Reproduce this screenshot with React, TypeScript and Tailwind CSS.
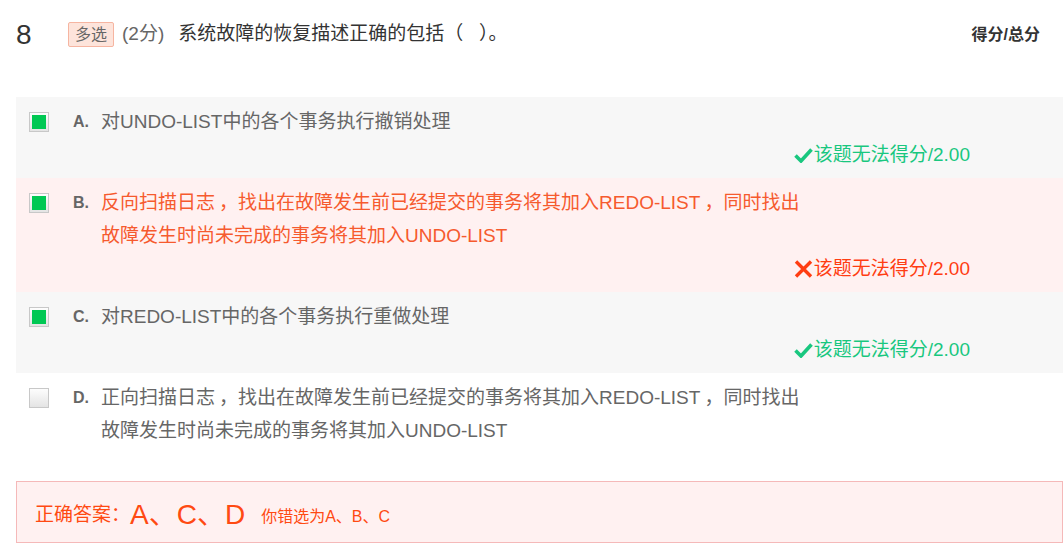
import React from 'react';

const FONT = { fontFamily: '"Liberation Sans", Arial, "Noto Sans CJK SC", sans-serif' };

type Opt = {
  key: string;
  lines: string[];
  checked: boolean;
  result?: 'right' | 'wrong';
};

const options: Opt[] = [
  { key: 'A', lines: ['对UNDO-LIST中的各个事务执行撤销处理'], checked: true, result: 'right' },
  {
    key: 'B',
    lines: ['反向扫描日志，找出在故障发生前已经提交的事务将其加入REDO-LIST，同时找出', '故障发生时尚未完成的事务将其加入UNDO-LIST'],
    checked: true,
    result: 'wrong',
  },
  { key: 'C', lines: ['对REDO-LIST中的各个事务执行重做处理'], checked: true, result: 'right' },
  {
    key: 'D',
    lines: ['正向扫描日志，找出在故障发生前已经提交的事务将其加入REDO-LIST，同时找出', '故障发生时尚未完成的事务将其加入UNDO-LIST'],
    checked: false,
  },
];

// full-width commas get a bit of air on the left, like the original
const Line = ({ text }: { text: string }) => {
  const parts = text.split('，');
  return (
    <div>
      {parts.map((p, i) => (
        <React.Fragment key={i}>
          {p}
          {i < parts.length - 1 && <span className="pl-[4px]">，</span>}
        </React.Fragment>
      ))}
    </div>
  );
};

const CheckBox = ({ checked }: { checked: boolean }) => (
  <div className="w-[20px] h-[20px] shrink-0 border border-[#c8c8c8] bg-gradient-to-b from-[#fdfdfd] to-[#e4e4e4] flex items-center justify-center">
    {checked && <div className="w-[14px] h-[14px] bg-[#00c853]" />}
  </div>
);

const CheckMark = () => (
  <svg width="19" height="16" viewBox="0 0 19 16" className="mr-[1px]">
    <path d="M1.5 8.5 L7 14 L17.5 2.5" fill="none" stroke="#19c77f" strokeWidth="3.6" strokeLinejoin="miter" />
  </svg>
);

const CrossMark = () => (
  <svg width="19" height="18" viewBox="0 0 19 18" className="mr-[1px]">
    <path d="M2 1.5 L17 16.5 M17 1.5 L2 16.5" fill="none" stroke="#ff3d12" strokeWidth="3.4" />
  </svg>
);

export default function App() {
  return (
    <div className="w-[1063px] h-[550px] bg-white overflow-hidden" style={FONT}>
      {/* header */}
      <div className="flex items-center h-[70px] pl-4 pr-[23px] pb-[1px]">
        <span className="text-[28px] text-[#333] leading-none w-[52px]">8</span>
        <span className="text-[16px] leading-[23px] px-[6px] border border-[#f6b5a1] bg-[#fde4db] text-[#666] rounded-[2px]">多选</span>
        <span className="text-[19px] text-[#666] ml-[8px]">(2分)</span>
        <span className="text-[19px] text-[#333] ml-[14px]">系统故障的恢复描述正确的包括（&nbsp;&nbsp;&nbsp;）。</span>
        <span className="ml-auto text-[16px] font-bold text-[#333]">得分/总分</span>
      </div>

      {/* options */}
      <div className="ml-4 mt-[27px]">
        {options.map((o) => {
          const bg = o.result === 'wrong' ? 'bg-[#fff1f1]' : o.result === 'right' ? 'bg-[#f7f7f7]' : 'bg-white';
          const txt = o.result === 'wrong' ? 'text-[#f65a2e]' : 'text-[#666]';
          return (
            <div key={o.key} className={`${bg} pt-2 pb-[7px]`}>
              <div className="flex items-start">
                <div className="pl-[13px] pt-[7px] w-[57px]">
                  <CheckBox checked={o.checked} />
                </div>
                <span className="text-[16px] font-bold text-[#666] leading-[33px] w-[28px]">{o.key}.</span>
                <div className={`text-[19px] leading-[33px] ${txt}`}>
                  {o.lines.map((l, i) => (
                    <Line key={i} text={l} />
                  ))}
                </div>
              </div>
              {o.result && (
                <div className="flex justify-end pr-[93px]">
                  <span className={`flex items-center text-[19px] leading-[33px] ${o.result === 'right' ? 'text-[#19c77f]' : 'text-[#ff3d12]'}`}>
                    {o.result === 'right' ? <CheckMark /> : <CrossMark />}
                    该题无法得分/2.00
                  </span>
                </div>
              )}
            </div>
          );
        })}
      </div>

      {/* answer */}
      <div className="ml-4 mt-[27px] h-[62px] border border-[#f5b9b9] bg-[#fff1f1] flex items-center pl-[18px] pt-[6px] text-[#ff4a12]">
        <span className="text-[19px]">正确答案：</span>
        <span className="text-[28px] leading-none">A、C、D</span>
        <span className="text-[16px] ml-[16px] pt-[4px]">你错选为A、B、C</span>
      </div>
    </div>
  );
}
